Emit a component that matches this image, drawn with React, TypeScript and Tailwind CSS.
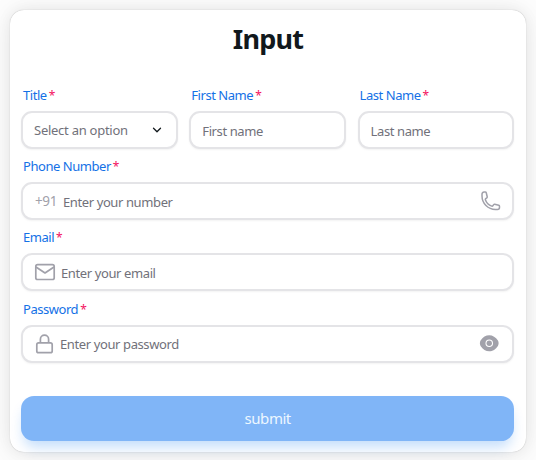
import type { ReactNode } from "react";

function Label({ children }: { children: string }) {
  return (
    <label className="flex h-[17px] items-center whitespace-nowrap pl-[2px] text-[13px] leading-[17px] tracking-[-0.035em] text-[#1471e6]">
      {children}
      <span className="ml-[2px] text-[12px] text-[#f31260]">*</span>
    </label>
  );
}

function Hint({ children }: { children: string }) {
  return (
    <span className="shrink-0 whitespace-nowrap pt-px text-[13px] leading-[18px] tracking-[-0.03em] text-[#71717a]">
      {children}
    </span>
  );
}

function Field({ label, children }: { label: string; children: ReactNode }) {
  return (
    <div className="h-[71.2px] min-w-0">
      <Label>{label}</Label>
      <div className="mt-[7px] flex h-[38px] items-center rounded-[11px] border-2 border-[#e4e4e7] bg-white px-[11px] shadow-[0_1px_2px_rgba(0,0,0,0.05)]">
        {children}
      </div>
    </div>
  );
}

export default function App() {
  return (
    <main className="h-[460px] overflow-hidden bg-[#fdfdfd] pl-[10px] pt-[10px] font-['Noto_Sans','Open_Sans',sans-serif]">
      <section className="h-[442px] w-[516px] rounded-[14px] bg-white px-[11px] shadow-[0_0_15px_rgba(0,0,0,0.06),0_2px_30px_rgba(0,0,0,0.08),0_0_1px_rgba(0,0,0,0.3)]">
        <h1 className="h-[77px] pt-[10px] text-center text-[27px] font-bold leading-[38px] tracking-[-0.03em] text-[#11181c]">Input</h1>
        <form className="w-[493.4px]">
          <div className="grid grid-cols-3 gap-[11.5px]">
            <Field label="Title">
              <span className="-mt-px flex tracking-normal"><span className="whitespace-nowrap pt-px text-[13px] leading-[18px] tracking-[-0.02em] text-[#71717a]">Select an option</span></span>
              <svg className="ml-auto mr-[1px]" width="14" height="14" viewBox="0 0 24 24" fill="none" stroke="#11181c" strokeWidth="2.2" strokeLinecap="round" strokeLinejoin="round"><path d="m6 9 6 6 6-6" /></svg>
            </Field>
            <Field label="First Name"><Hint>First name</Hint></Field>
            <Field label="Last Name"><Hint>Last name</Hint></Field>
          </div>
          <Field label="Phone Number">
            <span className="ml-px mr-[6px] text-[13.5px] leading-[18px] tracking-[-0.03em] text-[#a1a1aa]">+91</span>
            <Hint>Enter your number</Hint>
            <svg className="ml-auto" width="21.5" height="21.5" viewBox="0 0 24 24" fill="none" stroke="#a1a1aa" strokeWidth="1.7" strokeLinejoin="round"><path d="M2.25 6.75c0 8.284 6.716 15 15 15h2.25a2.25 2.25 0 0 0 2.25-2.25v-1.372c0-.516-.351-.966-.852-1.091l-4.423-1.106c-.44-.11-.902.055-1.173.417l-.97 1.293c-.282.376-.769.542-1.21.38a12.035 12.035 0 0 1-7.143-7.143c-.162-.441.004-.928.38-1.21l1.293-.97c.363-.271.527-.734.417-1.173L6.963 3.102a1.125 1.125 0 0 0-1.091-.852H4.5A2.25 2.25 0 0 0 2.25 4.5v2.25Z" /></svg>
          </Field>
          <Field label="Email">
            <svg className="mr-[5px]" width="22" height="22" viewBox="0 0 22 22" fill="none" stroke="#a1a1aa" strokeWidth="1.7" strokeLinejoin="round"><rect x="1.8" y="3.7" width="18.4" height="14.8" rx="1.8" /><path d="m2 6 9 6 9-6" /></svg>
            <Hint>Enter your email</Hint>
          </Field>
          <Field label="Password">
            <svg className="mr-[4px]" width="22" height="22" viewBox="0 0 22 22" fill="none" stroke="#a1a1aa" strokeWidth="1.7" strokeLinejoin="round"><rect x="2.8" y="9.9" width="15.4" height="9.8" rx="1.8" /><path d="M6.4 9.9V6.2a4.1 4.1 0 0 1 8.2 0v3.7" /></svg>
            <Hint>Enter your password</Hint>
            <svg className="ml-auto mr-[0.5px]" width="22.5" height="22.5" viewBox="0 0 24 24" fill="#a1a1aa"><path d="M21.25 9.15C18.94 5.52 15.56 3.43 12 3.43c-1.78 0-3.51.52-5.09 1.49-1.58.98-3 2.41-4.16 4.23-1 1.57-1 4.12 0 5.69 2.31 3.64 5.69 5.72 9.25 5.72 1.78 0 3.51-.52 5.09-1.49 1.58-.98 3-2.41 4.16-4.23 1-1.56 1-4.12 0-5.69ZM12 16.04A4.04 4.04 0 1 1 12 7.96a4.04 4.04 0 0 1 0 8.08Z" /><circle cx="12" cy="12" r="2.86" /></svg>
          </Field>
          <button type="button" className="mt-[24px] flex h-[45px] w-full items-center justify-center rounded-[13px] bg-[#80b5f7] text-[15px] tracking-[-0.03em] text-[#edf7ff] shadow-[0_9px_13px_-3px_rgba(0,111,238,0.24)]">
            submit
          </button>
        </form>
      </section>
    </main>
  );
}
